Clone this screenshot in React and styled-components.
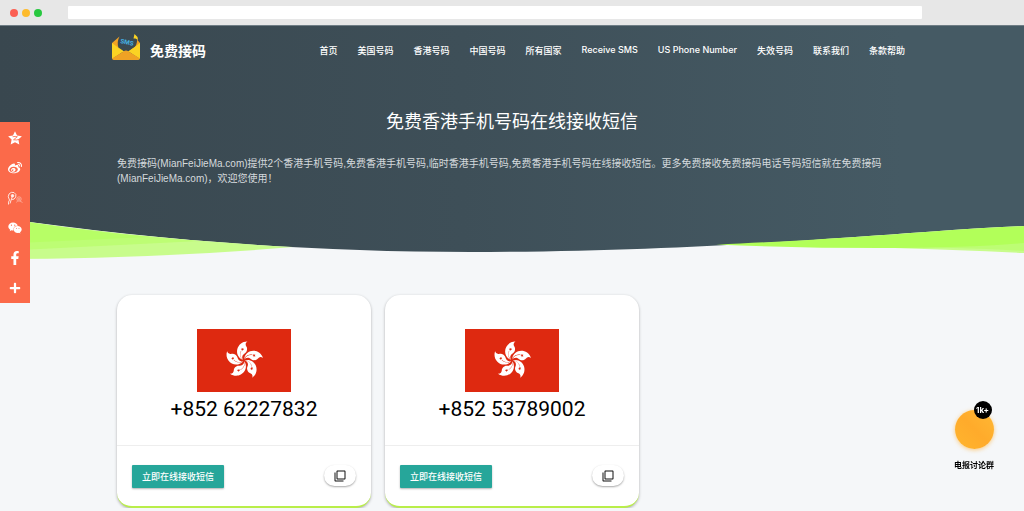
import React from 'react'
import styled, { createGlobalStyle, css } from 'styled-components'
import { FaWeibo, FaWeixin, FaFacebookF, FaPlus } from 'react-icons/fa'
import { MdFilterNone } from 'react-icons/md'

const GlobalStyle = createGlobalStyle`
  * {
    box-sizing: border-box;
  }
  body {
    margin: 0;
    background: #f5f7f9;
    color: #000;
    font-family: Inter, 'Noto Sans CJK SC', sans-serif;
    font-size: 10px;
  }
  a {
    color: inherit;
    text-decoration: none;
  }
  button {
    border: 0;
    padding: 0;
    font-family: inherit;
    cursor: pointer;
  }
`

const BrowserBar = styled.div`
  display: flex;
  align-items: center;
  height: 25px;
  padding: 0 102px 0 10px;
  background: #e7e7e7;
`

const Dots = styled.div`
  display: flex;
  gap: 4px;
  width: 58px;
`

const Dot = styled.span`
  width: 8px;
  height: 8px;
  border-radius: 50%;
  background: ${props => props.$color};
`

const Address = styled.input`
  flex: 1;
  min-width: 0;
  height: 13px;
  border: 0;
  border-radius: 1px;
  padding: 0 4px;
  background: #fff;
  font-size: 9px;
  outline: none;
`

const Hero = styled.div`
  border-top: 1px solid #6f7d85;
  background: linear-gradient(90deg, #39474f, #3e4f58 45%, #455a64 88%);
  color: #fff;
`

const container = css`
  width: 100%;
  max-width: 790px;
  margin: 0 auto;
`

const Header = styled.header`
  ${container}
  display: flex;
  align-items: center;
  justify-content: space-between;
  max-width: 802px;
  height: 48px;
  padding-right: 8px;
`

const Brand = styled.a`
  display: flex;
  align-items: center;
  gap: 9px;
  font-size: 14px;
  font-weight: 700;
`

const Nav = styled.nav`
  display: flex;
  gap: 20px;
  font-size: 9px;
  font-weight: 500;
  white-space: nowrap;
`

const Intro = styled.section`
  ${container}
  padding: 36px 0 24px;
`

const Title = styled.h1`
  margin: 0 0 22px;
  font-size: 18px;
  font-weight: 400;
  line-height: 24px;
  text-align: center;
`

const Lead = styled.p`
  margin: 0;
  color: #d5dadd;
  font-family: 'Liberation Sans', 'Noto Sans CJK SC', sans-serif;
  font-size: 10px;
  line-height: 15px;
`

const WaveSvg = styled.svg`
  display: block;
  width: 100%;
  height: 60px;
`

const Cards = styled.main`
  ${container}
  display: grid;
  grid-template-columns: repeat(3, 1fr);
  gap: 14px;
  padding-top: 25px;
`

const Card = styled.article`
  border-bottom: 2px solid #b9ee4a;
  border-radius: 15px;
  background: #fff;
  box-shadow: 0 1px 3px rgba(0, 0, 0, 0.3);
`

const CardBody = styled.div`
  display: flex;
  flex-direction: column;
  align-items: center;
  gap: 5px;
  padding: 34px 0 24px;
`

const FlagSvg = styled.svg`
  width: 94px;
  height: 63px;
`

const Phone = styled.h2`
  margin: 0;
  font-family: Roboto, sans-serif;
  font-size: 21px;
  font-weight: 400;
  line-height: 24px;
`

const CardFooter = styled.div`
  display: flex;
  align-items: flex-start;
  justify-content: space-between;
  border-top: 1px solid #eee;
  padding: 19px 15px 18px;
`

const Receive = styled.a`
  padding: 0 10px;
  border-radius: 1px;
  background: #26a69a;
  box-shadow: 0 1px 2px rgba(0, 0, 0, 0.3);
  color: #fff;
  font-size: 9px;
  font-weight: 500;
  line-height: 23px;
`

const Copy = styled.button`
  display: flex;
  align-items: center;
  justify-content: center;
  width: 32px;
  height: 21px;
  border-radius: 11px;
  background: #fff;
  box-shadow: 0 1px 2px rgba(0, 0, 0, 0.35);
  color: #111;
  font-size: 12px;
`

const Share = styled.aside`
  position: fixed;
  top: 122px;
  left: 0;
  display: flex;
  flex-direction: column;
  width: 30px;
  padding-top: 1px;
  background: #fb6a4a;
`

const ShareButton = styled.button`
  display: flex;
  align-items: center;
  justify-content: center;
  height: 30px;
  background: none;
  color: #fff;
  font-size: ${props => props.$size || 14}px;
`

const Telegram = styled.a`
  position: fixed;
  right: 30px;
  bottom: 40px;
  display: flex;
  flex-direction: column;
  align-items: center;
  gap: 10px;
  font-size: 8px;
  font-weight: 700;
  line-height: 12px;
`

const Bubble = styled.span`
  position: relative;
  width: 39px;
  height: 39px;
  border-radius: 50%;
  background: linear-gradient(45deg, #ffb52e, #ffab2b 50%, #ffb834);
  box-shadow: 0 1px 4px rgba(255, 171, 43, 0.6);
`

const Badge = styled.span`
  position: absolute;
  top: -9px;
  right: 2px;
  width: 18px;
  height: 18px;
  border-radius: 50%;
  background: #000;
  color: #fff;
  font-size: 8px;
  line-height: 18px;
  text-align: center;
`

const links = [
  '首页',
  '美国号码',
  '香港号码',
  '中国号码',
  '所有国家',
  'Receive SMS',
  'US Phone Number',
  '失效号码',
  '联系我们',
  '条款帮助',
]

const phones = ['+852 62227832', '+852 53789002']

const PETAL =
  'M346.3 103.2C267 98 230.6 201.9 305.6 240.3c-26-22.4-20.6-55.3-10.1-72.4l1.9 1.1c-13.8 23.5-11.2 52.8 11.1 71-12.7-12.3-9.5-39 12.1-48.9s23.6-39.3 16.4-49.1q-14.7-25.6 9.3-38.7z'
const STAR =
  'M307.9 164l-4.7 7.4-1.8-8.6-8.6-2.3 7.8-4.3-.6-8.9 6.5 6.1 8.3-3.3-3.7 8.1 5.6 6.8z'

function Logo() {
  return (
    <svg width="30" height="32" viewBox="0 3 30 32" aria-hidden="true">
      <path d="M1 12 8.500 5.500Q5.500 11 7.500 17L1 20zM29 12l-3-3.500Q26.500 14 22 18l7 2z" fill="#f0a224" />
      <path d="M1 12 12.500 20.500 1 28zM29 12 17.500 20.500 29 28z" fill="#fbd323" />
      <path d="M7.500 16.500 15 22 23 16.500 19 21h-8z" fill="#fbd323" />
      <path
        d="M1 27.500 12.500 20.500Q15 18.500 17.500 20.500L29 27.500Q28.500 29 27 29H3Q1.500 29 1 27.500z"
        fill="#f0a224"
      />
      <path d="M23.500 3 26.500 6 27 9 24.500 7.500 22.500 7.500z" fill="#fbd323" />
      <text
        x="9"
        y="12"
        fill="#45b0e2"
        fontFamily="Inter, sans-serif"
        fontSize="6"
        fontWeight="700"
        transform="rotate(12 9 12)"
      >
        SMS
      </text>
    </svg>
  )
}

function Flag() {
  return (
    <FlagSvg viewBox="-44 7 714 474" preserveAspectRatio="xMidYMid slice" role="img" aria-label="香港">
      <path fill="#de2910" d="M-44 7h714v474H-44z" />
      {[0, 72, 144, 216, 288].map(angle => (
        <g key={angle} transform={`rotate(${angle - 3} 312.5 243.5)`}>
          <path fill="#fff" d={PETAL} />
          <path fill="#de2910" d={STAR} />
        </g>
      ))}
    </FlagSvg>
  )
}

function Qzone() {
  return (
    <svg width="14" height="14" viewBox="0 0 24 24" aria-hidden="true">
      <path
        fill="currentColor"
        d="M12 .5 15.500 7.800 23.800 8.800 17.800 14.700 19.400 23 12 19.200 4.600 23 6.200 14.700.2 8.800l8.300-1z"
      />
      <path
        fill="none"
        stroke="#fb6a4a"
        strokeWidth="1.400"
        d="M8 9.800q4.500-1 8 0L9.500 15q5.500 1.200 10.500-1"
      />
    </svg>
  )
}

function Pin() {
  return (
    <svg width="16" height="14" viewBox="0 0 32 28" aria-hidden="true">
      <g fill="none" stroke="currentColor" strokeWidth="1.800" opacity="0.900">
        <path d="M3 27q-1-5 2-9Q.5 11 4 6 8 1 14 3q5.500 3 3.500 9Q15 18 9 17" />
        <path d="M6 25 10.500 11" />
        <circle cx="11" cy="9.500" r="2.500" fill="currentColor" />
        <g strokeWidth="1" opacity="0.800">
          <circle cx="24" cy="16" r="4.500" />
          <path d="M21 16h6M24 13v7M26 20l5 3M21 20l-2 3" />
        </g>
      </g>
    </svg>
  )
}

function Wave() {
  return (
    <WaveSvg viewBox="0 0 1024 60" preserveAspectRatio="none" aria-hidden="true">
      <path
        fill="#f5f7f9"
        d="M0 8C150 29 300 42 470 42C680 42 850 27 929 21.700Q980 17.500 1024 16V60H0z"
      />
      <path fill="#c8fc8c" d="M0 8Q140 29 293 37Q150 49 0 49z" />
      <path fill="#bdfd74" d="M0 8Q110 24.500 200 31Q100 36 0 41z" />
      <path fill="#b7fe66" d="M0 8Q80 21 150 27Q80 30 0 34z" />
      <path fill="#c8fc8c" d="M880 30H1024V43Q960 40 880 37.500z" />
      <path fill="#bdfd74" d="M880 30H1024V41Q960 37 880 37z" />
      <path
        fill="#b2ff59"
        d="M716 34.500C800 31 870 26 929 21.700Q980 17.500 1024 16V33Q970 38 880 38 800 38 716 34.500z"
      />
    </WaveSvg>
  )
}

export default function App() {
  return (
    <>
      <GlobalStyle />
      <BrowserBar>
        <Dots>
          <Dot $color="#fb5f52" />
          <Dot $color="#fdbb2d" />
          <Dot $color="#28c840" />
        </Dots>
        <Address type="text" aria-label="Address" />
      </BrowserBar>
      <Hero>
        <Header>
          <Brand href="#">
            <Logo />
            免费接码
          </Brand>
          <Nav>
            {links.map(link => (
              <a key={link} href="#">
                {link}
              </a>
            ))}
          </Nav>
        </Header>
        <Intro>
          <Title>免费香港手机号码在线接收短信</Title>
          <Lead>
            免费接码(MianFeiJieMa.com)提供2个香港手机号码,免费香港手机号码,临时香港手机号码,免费香港手机号码在线接收短信。更多免费接收免费接码电话号码短信就在免费接码(MianFeiJieMa.com)，欢迎您使用！
          </Lead>
        </Intro>
        <Wave />
      </Hero>
      <Cards>
        {phones.map(phone => (
          <Card key={phone}>
            <CardBody>
              <Flag />
              <Phone>{phone}</Phone>
            </CardBody>
            <CardFooter>
              <Receive href="#">立即在线接收短信</Receive>
              <Copy type="button" aria-label={`复制 ${phone}`}>
                <MdFilterNone />
              </Copy>
            </CardFooter>
          </Card>
        ))}
      </Cards>
      <Share>
        <ShareButton type="button" aria-label="QQ空间">
          <Qzone />
        </ShareButton>
        <ShareButton type="button" aria-label="微博">
          <FaWeibo />
        </ShareButton>
        <ShareButton type="button" aria-label="Pin">
          <Pin />
        </ShareButton>
        <ShareButton type="button" aria-label="微信">
          <FaWeixin />
        </ShareButton>
        <ShareButton type="button" aria-label="Facebook">
          <FaFacebookF />
        </ShareButton>
        <ShareButton type="button" aria-label="更多" $size={12}>
          <FaPlus />
        </ShareButton>
      </Share>
      <Telegram href="#">
        <Bubble>
          <Badge>1k+</Badge>
        </Bubble>
        电报讨论群
      </Telegram>
    </>
  )
}
